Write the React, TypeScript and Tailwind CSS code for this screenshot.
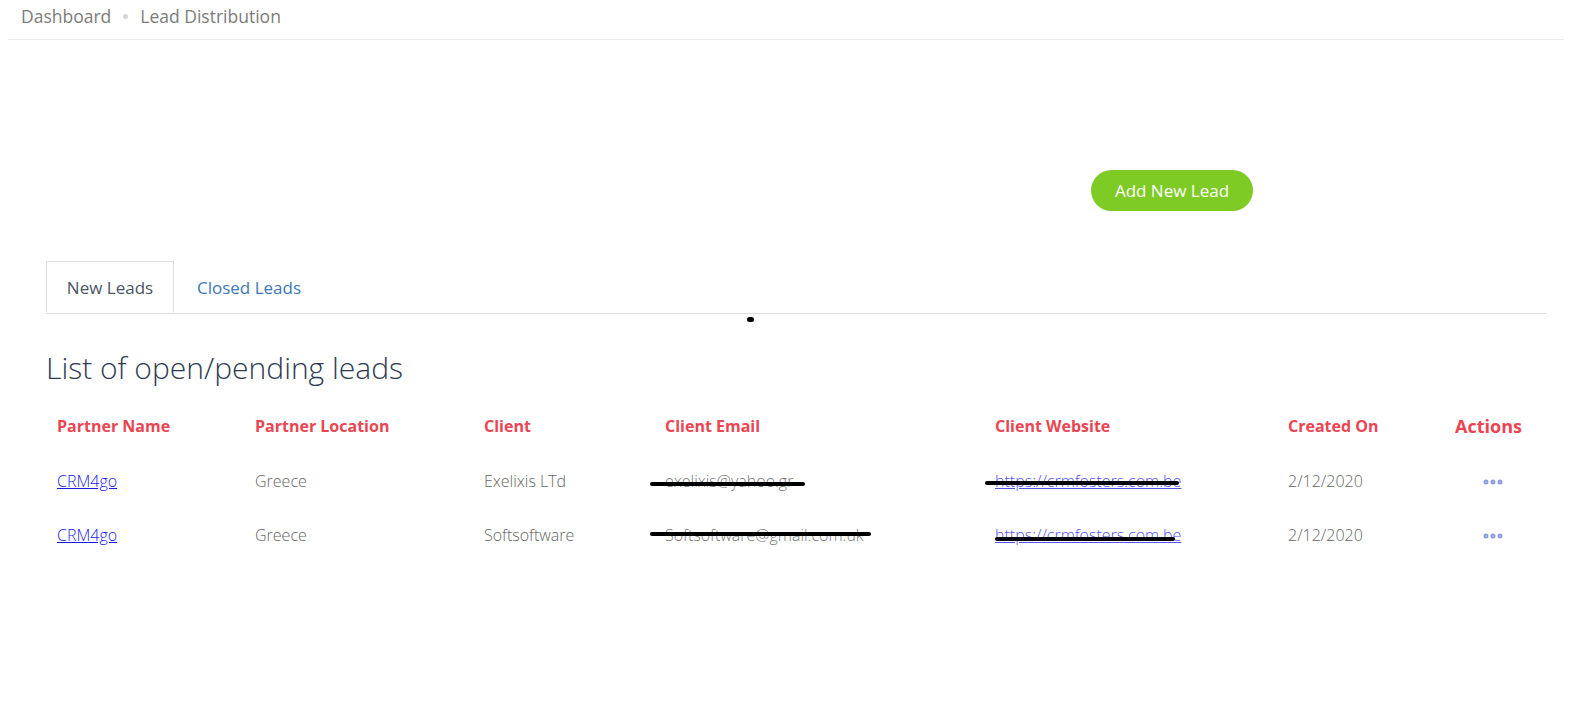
import { MoreHorizontal } from "lucide-react";

const rows = [
  {
    partner: "CRM4go",
    location: "Greece",
    client: "Exelixis LTd",
    email: "exelixis@yahoo.gr",
    website: "https://crmfosters.com.be",
    created: "2/12/2020",
    emailStrike: "left-[-15px] w-[155px] top-[12px]",
    webStrike: "left-[-10px] w-[194px] top-[11px]",
  },
  {
    partner: "CRM4go",
    location: "Greece",
    client: "Softsoftware",
    email: "Softsoftware@gmail.com.uk",
    website: "https://crmfosters.com.be",
    created: "2/12/2020",
    emailStrike: "left-[-15px] w-[221px] top-[8px]",
    webStrike: "left-[0px] w-[180px] top-[13px]",
  },
];

export default function App() {
  return (
    <div className="min-h-screen bg-white font-['Open_Sans',sans-serif]">
      {/* Breadcrumb */}
      <div className="mx-2 border-b border-[#ebebeb] px-[13px] h-10 flex items-center pb-[6px] text-[17.5px] text-[#7b7b7b]">
        <span>Dashboard</span>
        <span className="mx-3 h-[5px] w-[5px] rounded-full bg-[#d6d6d6]" />
        <span>Lead Distribution</span>
      </div>

      <div className="px-[46px] pr-[26px]">
        {/* Action */}
        <div className="flex justify-end pr-[293px] pt-[130px]">
          <button className="h-[41px] w-[162px] rounded-full bg-[#7ecb25] text-[17px] text-white">
            Add New Lead
          </button>
        </div>

        {/* Tabs */}
        <div className="relative mt-[50px] flex border-b border-[#dddddd]">
          <div className="-mb-px h-[52px] w-[128px] border border-b-white border-[#dddddd] bg-white flex items-center justify-center pt-[2px] text-[17px] text-[#4b5563]">
            New Leads
          </div>
          <div className="h-[52px] px-[23px] pt-[2px] flex items-center text-[17px] text-[#3a78b8]">
            Closed Leads
          </div>
          <span className="absolute left-[701px] top-[56px] h-[5px] w-[7px] rounded-full bg-black" />
        </div>

        <h1 className="mt-[39px] text-[30px] font-light leading-none text-[#2e3a52]">
          List of open/pending leads
        </h1>

        {/* Table */}
        <table className="mt-[18px] w-full table-fixed">
          <thead>
            <tr className="h-[50px] text-left text-[16px] font-bold text-[#ea4552]">
              <th className="w-[198px] pl-[11px]">Partner Name</th>
              <th className="w-[229px] pl-[11px]">Partner Location</th>
              <th className="w-[181px] pl-[11px]">Client</th>
              <th className="w-[330px] pl-[11px]">Client Email</th>
              <th className="w-[293px] pl-[11px]">Client Website</th>
              <th className="w-[154px] pl-[11px]">Created On</th>
              <th className="text-center text-[18px]">Actions</th>
            </tr>
          </thead>
          <tbody>
            {rows.map((r, i) => (
              <tr key={i} className="h-[54px] text-[16px] font-light text-[#666]">
                <td className="pl-[11px] pt-[6px]">
                  <a href="#" className="text-[#1a1ae6] underline">
                    {r.partner}
                  </a>
                </td>
                <td className="pl-[11px] pt-[6px]">{r.location}</td>
                <td className="pl-[11px] pt-[6px]">{r.client}</td>
                <td className="pl-[11px] pt-[6px] text-[#777]">
                  <span className="relative">
                    {r.email}
                    <span className={`absolute h-[4px] rounded-full bg-black ${r.emailStrike}`} />
                  </span>
                </td>
                <td className="pl-[11px] pt-[6px]">
                  <span className="relative">
                    <a href="#" className="text-[#5252ee] underline">
                      {r.website}
                    </a>
                    <span className={`absolute h-[4px] rounded-full bg-black ${r.webStrike}`} />
                  </span>
                </td>
                <td className="pl-[11px] pt-[6px]">{r.created}</td>
                <td className="pt-[8px] text-center">
                  <MoreHorizontal className="mx-auto h-6 w-6 translate-x-[4px] text-[#8b9be0]" strokeWidth={3} />
                </td>
              </tr>
            ))}
          </tbody>
        </table>
      </div>
    </div>
  );
}
